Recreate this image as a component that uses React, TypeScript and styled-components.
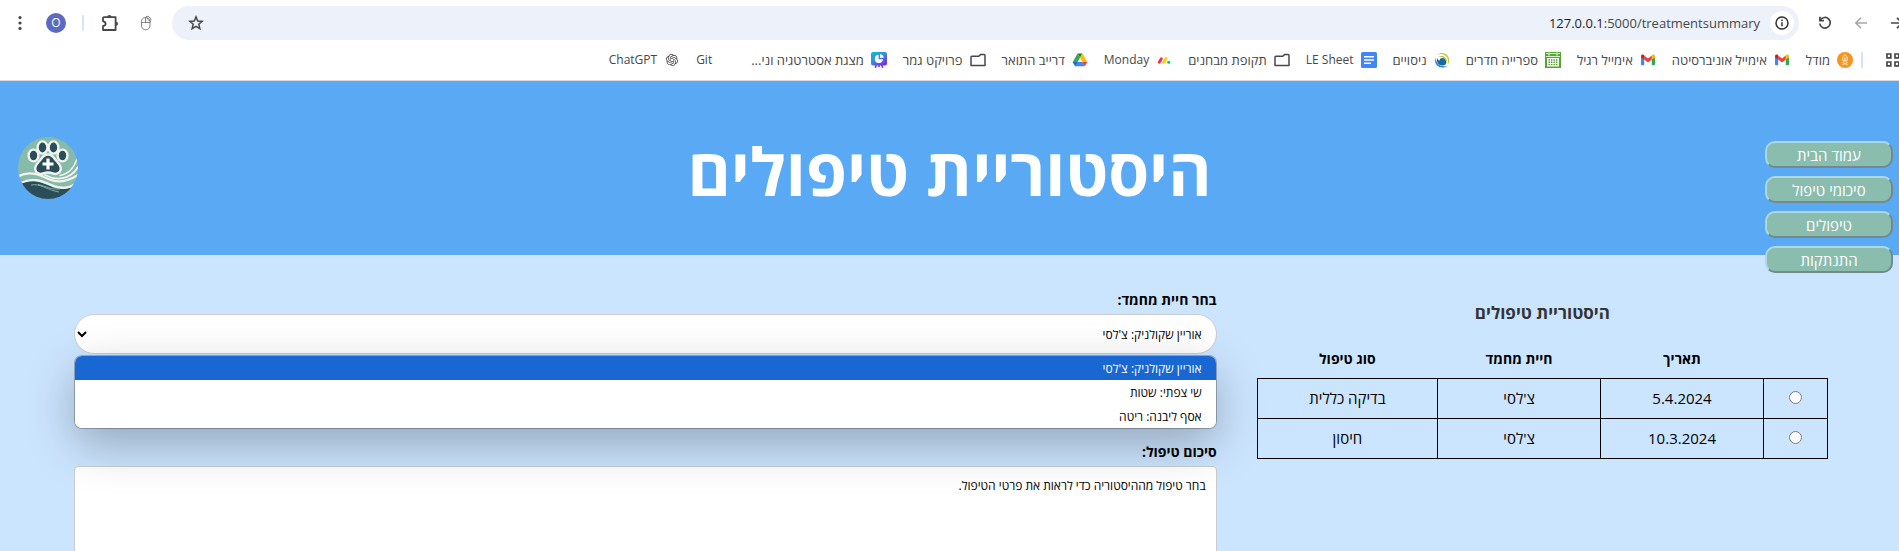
import React from 'react';
import styled, { createGlobalStyle } from 'styled-components';
import { SiOpenai } from 'react-icons/si';

const uiFont = '"Open Sans", "Noto Sans", "Liberation Sans", sans-serif';

const GlobalStyle = createGlobalStyle`
  *, *::before, *::after { box-sizing: border-box; }
  body { margin: 0; font-family: ${uiFont}; background: #cce5ff; }
  button, select, textarea, input { font-family: inherit; }
`;

const Screen = styled.div`
  height: 100vh;
  display: flex;
  flex-direction: column;
  overflow: hidden;
`;

const BrowserChrome = styled.div`
  flex: none;
  background: #fff;
  border-bottom: 1px solid #dadce0;
`;

const Toolbar = styled.div`
  display: flex;
  align-items: center;
  height: 40px;
  padding: 6px 10px 0 2px;
`;

const IconButton = styled.button<{ $width?: number; $color?: string }>`
  flex: none;
  display: flex;
  align-items: center;
  justify-content: center;
  width: ${(p) => p.$width ?? 36}px;
  height: 34px;
  padding: 0;
  border: 0;
  background: none;
  color: ${(p) => p.$color ?? '#474747'};
`;

const ForwardSlot = styled.div`
  display: flex;
  margin-right: -15px;
  margin-left: 11px;
`;

const Avatar = styled.span`
  width: 20px;
  height: 20px;
  border-radius: 50%;
  background: #5c6bc0;
  color: #fff;
  font-size: 12px;
  line-height: 20px;
  text-align: center;
`;

const Divider = styled.span`
  flex: none;
  width: 2px;
  height: 16px;
  border-radius: 1px;
  margin: 0 8px;
  background: #d3e3fd;
`;

const AddressBar = styled.div`
  flex: 1;
  min-width: 0;
  display: flex;
  align-items: center;
  height: 34px;
  margin: 0 8px;
  padding: 0 5px 0 6px;
  border-radius: 17px;
  background: #edf1fa;
`;

const Url = styled.div`
  flex: 1;
  padding: 0 10px;
  font-size: 13px;
  line-height: 20px;
  color: #474747;
  text-align: right;
  direction: ltr;
`;

const Host = styled.span`
  color: #1f1f1f;
`;

const InfoButton = styled(IconButton)`
  width: 24px;
  height: 24px;
  border-radius: 50%;
  background: #fff;
`;

const BookmarksBar = styled.nav`
  display: flex;
  align-items: center;
  height: 40px;
`;

const AppsButton = styled(IconButton)`
  width: 16px;
  margin-right: -2px;
  margin-left: 14px;
`;

const BookmarkList = styled.div`
  display: flex;
  gap: 16px;
`;

const Bookmark = styled.a<{ $latin: boolean }>`
  flex: none;
  display: flex;
  align-items: center;
  gap: 7px;
  font-size: ${(p) => (p.$latin ? 12 : 13)}px;
  line-height: 16px;
  color: #474747;
  text-decoration: none;
  white-space: nowrap;
`;

const BookmarkIcon = styled.span`
  flex: none;
  width: 16px;
  height: 16px;
  display: flex;
  align-items: center;
  justify-content: center;
`;

const Page = styled.div`
  position: relative;
  flex: 1;
  min-height: 0;
  overflow: hidden;
`;

const Header = styled.header`
  display: flex;
  align-items: center;
  justify-content: center;
  height: 174px;
  padding-top: 4px;
  background: #5aa9f4;
`;

const Title = styled.h1`
  margin: 0;
  font-size: 66px;
  line-height: 96px;
  font-weight: 700;
  color: #fff;
`;

const LogoLink = styled.a`
  position: absolute;
  left: 18px;
  top: 56px;
  display: flex;
`;

const SideNav = styled.nav`
  position: absolute;
  right: 6px;
  top: 60px;
  display: flex;
  flex-direction: column;
  gap: 8px;
`;

const NavButton = styled.button`
  width: 128px;
  height: 27px;
  padding: 0;
  border: 2px solid;
  border-color: #add8e6 #708a8e #708a8e #add8e6;
  border-radius: 10px;
  background: #8abdae;
  color: #fff;
  font-size: 15px;
  line-height: 20px;
`;

const Main = styled.main`
  display: grid;
  grid-template-columns: 1fr 2fr;
  gap: 40px;
  padding: 35px 71px 0 74px;
`;

const HistoryTitle = styled.h2`
  margin: 10px 0 20px;
  font-size: 17px;
  line-height: 26px;
  font-weight: 700;
  color: #333;
  text-align: center;
`;

const HistoryTable = styled.table`
  width: 100%;
  table-layout: fixed;
  border-collapse: collapse;
  font-size: 15px;
  line-height: 20px;
  text-align: center;
`;

const Th = styled.th<{ $share: number }>`
  width: ${(p) => p.$share}%;
  height: 32px;
  padding: 0 0 6px;
  font-size: 14px;
  font-weight: 700;
`;

const Td = styled.td`
  height: 40px;
  padding: 0;
  border: 1px solid #000;
`;

const Radio = styled.input`
  width: 13px;
  height: 13px;
  margin: 0;
`;

const Form = styled.form`
  display: flex;
  flex-direction: column;
`;

const Label = styled.label`
  font-size: 14px;
  line-height: 20px;
  font-weight: 700;
  margin-bottom: 4px;
`;

const SelectField = styled.div`
  position: relative;
  margin-bottom: 88px;
`;

const Select = styled.select`
  display: block;
  width: 100%;
  height: 40px;
  padding: 10px;
  border: 1px solid #ccc;
  border-radius: 20px;
  background-color: #fff;
  color: #000;
  font-size: 12px;
`;

const Menu = styled.ul`
  position: absolute;
  top: 42px;
  left: 1px;
  right: 1px;
  margin: 0;
  padding: 0;
  list-style: none;
  border-radius: 7px;
  overflow: hidden;
  background: #fff;
  box-shadow: 0 0 0 1px rgba(0, 0, 0, 0.25), 0 16px 48px rgba(0, 0, 0, 0.28);
`;

const Option = styled.li<{ $active: boolean }>`
  height: 24px;
  padding: 0 14px;
  font-size: 12px;
  line-height: 26px;
  color: ${(p) => (p.$active ? '#fff' : '#000')};
  background: ${(p) => (p.$active ? '#1967d2' : '#fff')};
`;

const Summary = styled.textarea`
  width: 100%;
  height: 200px;
  padding: 10px;
  border: 1px solid #ccc;
  border-radius: 4px;
  background: #fff;
  color: #000;
  font-size: 12px;
  line-height: 18px;
  resize: none;
`;

const KebabIcon = () => (
  <svg width="16" height="16" viewBox="0 0 16 16" fill="currentColor">
    <circle cx="8" cy="2.6" r="1.6" />
    <circle cx="8" cy="8" r="1.6" />
    <circle cx="8" cy="13.4" r="1.6" />
  </svg>
);

const PuzzleIcon = () => (
  <svg width="18" height="18" viewBox="0 0 18 18" fill="none">
    <path
      d="M3 3.2h11.6v12.8H2V12c1.7-.2 2.6-1.1 2.6-2.3S3.7 7.500 2 7.300V4.200a1 1 0 0 1 1-1z"
      stroke="currentColor"
      strokeWidth="1.8"
      strokeLinejoin="round"
    />
    <path d="M6.300 3a2.100 2.100 0 0 1 4.200 0zM15 7.800a2 2 0 0 1 0 4z" fill="currentColor" />
  </svg>
);

const MouseIcon = () => (
  <svg width="14" height="16" viewBox="0 0 14 16" fill="none" stroke="#777" strokeWidth="0.9">
    <path d="M2.500 6.500C2.500 4 4 2.500 6.500 2.500s4.500 1.500 4.500 4v3.500c0 3-1.700 4.800-4.300 4.800S2.500 13 2.500 10zM1.800 7.500h9.500M6.500 2.500v5M6.500 2.500C6.800 1.200 9 .8 10.300 2S12.500 5 11 7" />
    <path d="M7.500 2.500l3 3.500" />
  </svg>
);

const StarIcon = () => (
  <svg width="16" height="16" viewBox="0 0 16 16" fill="none" stroke="currentColor" strokeWidth="1.5">
    <path d="M8 1.900l1.750 4.100 4.450.4-3.400 2.900 1.050 4.350L8 11.300l-3.850 2.350L5.200 9.300 1.800 6.400l4.450-.4z" />
  </svg>
);

const InfoIcon = () => (
  <svg width="14" height="14" viewBox="0 0 14 14">
    <circle cx="7" cy="7" r="6" fill="none" stroke="#333" strokeWidth="1.5" />
    <path d="M7 6.200v4M7 3.600v1.500" stroke="#333" strokeWidth="1.5" />
  </svg>
);

const ReloadIcon = () => (
  <svg width="16" height="16" viewBox="0 0 16 16" fill="none" stroke="currentColor" strokeWidth="1.7">
    <path d="M3.300 5.200A5.300 5.300 0 1 1 2.700 8.500" />
    <path d="M2.900 1.800v3.900h4" />
  </svg>
);

const BackIcon = () => (
  <svg width="14" height="14" viewBox="0 0 14 14" fill="none" stroke="currentColor" strokeWidth="1.5">
    <path d="M13 7H2M7 1.800L1.800 7 7 12.200" />
  </svg>
);

const ForwardIcon = () => (
  <svg width="14" height="14" viewBox="0 0 14 14" fill="none" stroke="currentColor" strokeWidth="1.7">
    <path d="M1 7h11M7 1.800L12.200 7 7 12.200" />
  </svg>
);

const AppsIcon = () => (
  <svg width="16" height="16" viewBox="0 0 16 16" fill="none" stroke="currentColor" strokeWidth="1.7">
    <path d="M2 2h3.800v3.800H2zM10 2h3.800v3.800H10zM2 10h3.800v3.800H2zM10 10h3.800v3.800H10z" />
  </svg>
);

const MoodleIcon = () => (
  <svg width="16" height="16" viewBox="0 0 16 16">
    <circle cx="8" cy="8" r="8" fill="#f7931e" />
    <path
      d="M8 2.600c2.200 2 3 4 1.700 6.400H6.300C5 6.600 5.800 4.600 8 2.600zM5.500 10.500l5 2.300M10.500 10.500l-5 2.300"
      fill="none"
      stroke="#fff"
      strokeWidth="0.9"
    />
    <path d="M8 5.500v3" stroke="#fff" strokeWidth="1" />
  </svg>
);

const GmailIcon = () => (
  <svg width="16" height="16" viewBox="0 0 16 16">
    <path d="M1 4.500L4.200 7v6.300H2.100A1.100 1.100 0 0 1 1 12.200z" fill="#4285f4" />
    <path d="M15 4.500L11.800 7v6.300h2.100a1.100 1.100 0 0 0 1.100-1.100z" fill="#34a853" />
    <path d="M4.200 3.500L8 6.400l3.800-2.900v4.100L8 10.500 4.200 7.600z" fill="#ea4335" />
    <path d="M1 4.300c0-1.600 1.700-2.200 2.800-1.400l.4.400v4.300L1 5.300z" fill="#c5221f" />
    <path d="M15 4.300c0-1.600-1.700-2.200-2.800-1.400l-.4.400v4.300L15 5.300z" fill="#fbbc04" />
  </svg>
);

const CalendarIcon = () => (
  <svg width="16" height="16" viewBox="0 0 16 16">
    <rect width="16" height="16" fill="#55a630" />
    <path d="M1 1.500h2M5 1.500h6M13 1.500h2M1 4.500h14" stroke="#d9efcf" strokeWidth="1" />
    <path d="M4 .5v3M12 .5v3" stroke="#fff" strokeWidth="1.2" />
    <rect x="2" y="6" width="12" height="8.5" fill="#fff" />
    <path
      d="M3.500 8h9.500M3.500 10.300h9.500M3.500 12.600h9.500"
      stroke="#4c9a2a"
      strokeWidth="1.4"
      strokeDasharray="1.4 1.1"
    />
  </svg>
);

const SwirlIcon = () => (
  <svg width="16" height="16" viewBox="0 0 16 16">
    <path d="M3 2.800C8-1.200 15.500 2 15.200 8.500c-.1 1.800-.8 3.200-1.700 4.200C15 8 13.500 3.500 9 2.400c-2-.5-4-.3-6 .4z" fill="#c6c92f" />
    <path d="M4 4.800c3.600-2.200 8.700-.2 8.800 4.300 0 1-.2 1.900-.6 2.500.2-3.500-1.400-5.600-4.200-6.400-1.300-.4-2.700-.5-4-.4z" fill="#b3bf3c" />
    <path d="M1.700 5.500C-.4 10.500 3 15.700 8.700 15.500c2 0 3.600-.8 4.700-1.800-4 1.200-8.300.4-10.300-3-1-1.600-1.500-3.300-1.400-5.200z" fill="#2b83c4" />
    <path d="M3.200 5.800C2 9.800 4.300 13.500 8 13.600c1.600 0 3-.5 3.800-1.400 1.300-3-.8-6.200-3.600-6.200-1.700 0-2.700 1-2.400 2.500C4.400 8.600 3.400 7.500 3.200 5.800z" fill="#1a689f" />
  </svg>
);

const DocsIcon = () => (
  <svg width="16" height="16" viewBox="0 0 16 16">
    <rect width="16" height="16" rx="1.5" fill="#4285f4" />
    <path d="M3 4.700h10M3 8h10M3 11.300h7" stroke="#fff" strokeWidth="1.5" />
  </svg>
);

const FolderIcon = () => (
  <svg width="16" height="16" viewBox="0 0 16 16" fill="none">
    <path
      d="M1 5.200a1 1 0 0 1 1-1h6.800l1.700-1.600H14a1 1 0 0 1 1 1v9.800H1z"
      stroke="#474747"
      strokeWidth="1.5"
      strokeLinejoin="round"
    />
  </svg>
);

const MondayIcon = () => (
  <svg width="16" height="16" viewBox="0 0 16 16" strokeLinecap="round" strokeWidth="2.8">
    <path d="M3.200 10.300l2.200-3.600" stroke="#f62b54" />
    <path d="M7.700 10.300l2.200-3.600" stroke="#ffcc00" />
    <circle cx="12.7" cy="10.3" r="1.5" fill="#00ca72" />
  </svg>
);

const DriveIcon = () => (
  <svg width="16" height="16" viewBox="0 0 16 16">
    <path d="M5.600 1.500h4.800L8 5.700z" fill="#188038" />
    <path d="M5.600 1.500L8 5.700 3.300 14.300.7 10z" fill="#34a853" />
    <path d="M10.400 1.500L15.300 10h-4.900L8 5.700z" fill="#fbbc04" />
    <path d="M5.600 10h4.800l2.400 4.300H3.300z" fill="#4285f4" />
    <path d="M10.400 10h4.900l-2.500 4.300z" fill="#ea4335" />
    <path d="M.7 10h4.900l-2.300 4.300z" fill="#1967d2" />
  </svg>
);

const SlidesIcon = () => (
  <svg width="16" height="16" viewBox="0 0 16 16">
    <defs>
      <linearGradient id="slidesFill" x1="0" y1="0" x2="0.8" y2="1">
        <stop offset="0" stopColor="#00c4cc" />
        <stop offset="0.5" stopColor="#3a8be0" />
        <stop offset="1" stopColor="#7d2ae8" />
      </linearGradient>
    </defs>
    <path d="M5.500 12.500L4.300 15.800M8 12.500v2.500M10.500 12.500l1.200 3.300" stroke="#7d2ae8" strokeWidth="1.6" />
    <rect width="16" height="13.5" rx="2" fill="url(#slidesFill)" />
    <path d="M7.600 2.800a4.100 4.100 0 1 0 4.400 4.500H7.600z" fill="#fff" />
    <path d="M9 2.200a4 4 0 0 1 3.700 3.600H9z" fill="#fff" />
  </svg>
);

const PawLogo = () => (
  <svg width="60" height="62" viewBox="0 0 60 62" role="img" aria-label="לוגו">
    <defs>
      <clipPath id="logoClip">
        <ellipse cx="30" cy="31" rx="30" ry="31" />
      </clipPath>
    </defs>
    <g clipPath="url(#logoClip)">
      <rect width="60" height="62" fill="#86bbaa" />
      <path d="M0 45C14 40 24 46 34 50S52 52 60 45V62H0z" fill="#2b4c59" />
      <g fill="none" stroke="#f1f3ef" strokeLinecap="round">
        <path d="M0 39.500C8 35 18 36 27 40.500S46 47 60 38" strokeWidth="2.2" />
        <path d="M0 47C14 40 24 44 32 47.500S48 53 58 47" strokeWidth="2.4" />
        <path d="M27 38C38 44 52 43 60 30" strokeWidth="1.8" />
        <path d="M42 38.500C50 37 56 31 59 22" strokeWidth="1.4" />
      </g>
      <path
        d="M13 48C22 46 29 53 41 55M20 47.500C28 49 33 53 42 52"
        fill="none"
        stroke="#86bbaa"
        strokeWidth="0.9"
      />
      <g fill="#2b4c59" stroke="#f1f3ef" strokeWidth="2.4">
        <ellipse cx="24.5" cy="10.5" rx="4.9" ry="6.1" />
        <ellipse cx="35.5" cy="10.5" rx="4.9" ry="6.1" />
        <ellipse cx="15.5" cy="18.5" rx="4.9" ry="5.9" />
        <ellipse cx="44.5" cy="18.5" rx="4.9" ry="5.9" />
        <path d="M30 17.500c4.500 0 6 3.500 8.500 6.500s5 5 4.200 8.700c-.8 4-5 4.800-8 3.600-3-1-6.400-1-9.400 0-3 1.200-7.200.4-8-3.600-.8-3.700 1.700-5.700 4.200-8.700s4-6.500 8.500-6.500z" />
      </g>
      <path d="M30 21.500v11M24.500 27h11" stroke="#fff" strokeWidth="3.2" />
    </g>
  </svg>
);

const bookmarks = [
  { label: 'מודל', icon: <MoodleIcon /> },
  { label: 'אימייל אוניברסיטה', icon: <GmailIcon /> },
  { label: 'אימייל רגיל', icon: <GmailIcon /> },
  { label: 'ספרייה חדרים', icon: <CalendarIcon /> },
  { label: 'ניסויים', icon: <SwirlIcon /> },
  { label: 'LE Sheet', icon: <DocsIcon />, latin: true },
  { label: 'תקופת מבחנים', icon: <FolderIcon /> },
  { label: 'Monday', icon: <MondayIcon />, latin: true },
  { label: 'דרייב התואר', icon: <DriveIcon /> },
  { label: 'פרויקט גמר', icon: <FolderIcon /> },
  { label: 'מצגת אסטרטגיה וני...', icon: <SlidesIcon /> },
  { label: 'Git', icon: null, latin: true },
  { label: 'ChatGPT', icon: <SiOpenai size={12} />, latin: true },
];

const navItems = ['עמוד הבית', 'סיכומי טיפול', 'טיפולים', 'התנתקות'];

const treatments = [
  { date: '5.4.2024', pet: "צ'לסי", kind: 'בדיקה כללית' },
  { date: '10.3.2024', pet: "צ'לסי", kind: 'חיסון' },
];

const pets = ["אוריין שקולניק: צ'לסי", 'שי צפתי: שטות', 'אסף ליבנה: ריטה'];

export default function App() {
  return (
    <Screen dir="rtl">
      <GlobalStyle />
      <BrowserChrome>
        <Toolbar>
          <ForwardSlot>
            <IconButton aria-label="קדימה" $width={14}>
              <ForwardIcon />
            </IconButton>
          </ForwardSlot>
          <IconButton aria-label="אחורה" $color="#a5a5a5">
            <BackIcon />
          </IconButton>
          <IconButton aria-label="טעינה מחדש">
            <ReloadIcon />
          </IconButton>
          <AddressBar>
            <InfoButton aria-label="פרטי האתר">
              <InfoIcon />
            </InfoButton>
            <Url>
              <Host>127.0.0.1</Host>:5000/treatmentsummary
            </Url>
            <IconButton aria-label="הוספה לסימניות">
              <StarIcon />
            </IconButton>
          </AddressBar>
          <IconButton aria-label="תוסף עכבר">
            <MouseIcon />
          </IconButton>
          <IconButton aria-label="תוספים">
            <PuzzleIcon />
          </IconButton>
          <Divider />
          <IconButton aria-label="פרופיל">
            <Avatar>O</Avatar>
          </IconButton>
          <IconButton aria-label="תפריט">
            <KebabIcon />
          </IconButton>
        </Toolbar>
        <BookmarksBar>
          <AppsButton aria-label="אפליקציות">
            <AppsIcon />
          </AppsButton>
          <Divider />
          <BookmarkList>
            {bookmarks.map((b) => (
              <Bookmark key={b.label} href="#" $latin={!!b.latin}>
                <BookmarkIcon>{b.icon}</BookmarkIcon>
                {b.label}
              </Bookmark>
            ))}
          </BookmarkList>
        </BookmarksBar>
      </BrowserChrome>
      <Page>
        <Header>
          <LogoLink href="#">
            <PawLogo />
          </LogoLink>
          <Title>היסטוריית טיפולים</Title>
        </Header>
        <SideNav>
          {navItems.map((item) => (
            <NavButton key={item}>{item}</NavButton>
          ))}
        </SideNav>
        <Main>
          <section>
            <HistoryTitle>היסטוריית טיפולים</HistoryTitle>
            <HistoryTable>
              <thead>
                <tr>
                  <Th $share={11} />
                  <Th $share={28}>תאריך</Th>
                  <Th $share={28}>חיית מחמד</Th>
                  <Th $share={31}>סוג טיפול</Th>
                </tr>
              </thead>
              <tbody>
                {treatments.map((t) => (
                  <tr key={t.date}>
                    <Td>
                      <Radio type="radio" name="treatment" aria-label={t.date} />
                    </Td>
                    <Td>{t.date}</Td>
                    <Td>{t.pet}</Td>
                    <Td>{t.kind}</Td>
                  </tr>
                ))}
              </tbody>
            </HistoryTable>
          </section>
          <Form>
            <Label htmlFor="pet">בחר חיית מחמד:</Label>
            <SelectField>
              <Select id="pet" defaultValue={pets[0]}>
                {pets.map((p) => (
                  <option key={p}>{p}</option>
                ))}
              </Select>
              <Menu role="listbox">
                {pets.map((p, i) => (
                  <Option key={p} role="option" aria-selected={i === 0} $active={i === 0}>
                    {p}
                  </Option>
                ))}
              </Menu>
            </SelectField>
            <Label htmlFor="summary">סיכום טיפול:</Label>
            <Summary id="summary" defaultValue="בחר טיפול מההיסטוריה כדי לראות את פרטי הטיפול." />
          </Form>
        </Main>
      </Page>
    </Screen>
  );
}
